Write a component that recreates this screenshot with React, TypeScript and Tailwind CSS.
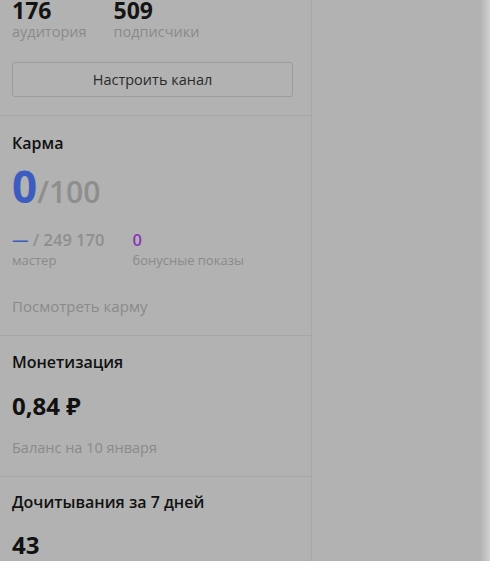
import React from 'react';

const font = { fontFamily: '"Open Sans", "Noto Sans", sans-serif' };

function Stat({ value, label }: { value: string; label: string }) {
    return (
        <div className="flex flex-col">
            <span className="text-[23px] font-bold leading-[20px] text-[#141414]">{value}</span>
            <span className="mt-[3px] text-[14.5px] leading-[18px] text-[#8a8a8a]">{label}</span>
        </div>
    );
}

function Section({ children, last }: { children: React.ReactNode; last?: boolean }) {
    return (
        <div className={`px-3 ${last ? '' : 'border-b border-[#a6a6a6]'}`}>{children}</div>
    );
}

export default function App() {
    return (
        <div className="flex h-[561px] w-[490px] overflow-hidden bg-[#b1b1b1]" style={font}>
            <div className="flex w-[312px] shrink-0 flex-col border-r border-[#a7a7a7] bg-[#b2b2b2]">
                <Section>
                    <div className="flex gap-[27px]">
                        <Stat value="176" label="аудитория" />
                        <Stat value="509" label="подписчики" />
                    </div>
                    <button className="mt-[21px] mb-[18px] flex h-[35px] w-[281px] items-center justify-center rounded-[3px] border border-[#9c9c9c] text-[14.5px] text-[#2a2a2a]">
                        Настроить канал
                    </button>
                </Section>
                <Section>
                    <div className="pt-[16px] text-[16px] font-semibold leading-[22px] text-[#111]">Карма</div>
                    <div className="mt-[10px] flex items-baseline leading-none">
                        <span className="text-[44px] font-bold text-[#3d5cc0]">0</span>
                        <span className="text-[30px] font-semibold text-[#8e8e8e]">/100</span>
                    </div>
                    <div className="mt-[22px] flex gap-[28px]">
                        <div className="flex flex-col">
                            <span className="text-[16.5px] font-semibold leading-[20px] text-[#8e8e8e]">
                                <span className="text-[#3d5cc0]">—</span> / 249 170
                            </span>
                            <span className="mt-[3px] text-[13px] leading-[15px] text-[#8a8a8a]">мастер</span>
                        </div>
                        <div className="flex flex-col">
                            <span className="text-[16.5px] font-semibold leading-[20px] text-[#8c35b8]">0</span>
                            <span className="mt-[3px] text-[13px] leading-[15px] text-[#8a8a8a]">бонусные показы</span>
                        </div>
                    </div>
                    <div className="mt-[28px] mb-[19px] text-[15px] leading-[20px] text-[#8a8a8a]">Посмотреть карму</div>
                </Section>
                <Section>
                    <div className="pt-[15px] text-[16px] font-semibold leading-[22px] text-[#111]">Монетизация</div>
                    <div className="mt-[18px] text-[24px] font-bold leading-[30px] text-[#111]">0,84 ₽</div>
                    <div className="mt-[17px] mb-[18px] text-[14.5px] leading-[20px] text-[#8a8a8a]">Баланс на 10 января</div>
                </Section>
                <Section last>
                    <div className="pt-[14px] text-[16px] font-semibold leading-[22px] text-[#111]">Дочитывания за 7 дней</div>
                    <div className="mt-[17px] text-[24px] font-bold leading-[30px] text-[#111]">43</div>
                </Section>
            </div>
            <div className="flex flex-1">
                <div className="flex-1" />
                <div className="w-[10px] bg-gradient-to-r from-[#b1b1b1] to-[#d0d0d0]" />
            </div>
        </div>
    );
}
